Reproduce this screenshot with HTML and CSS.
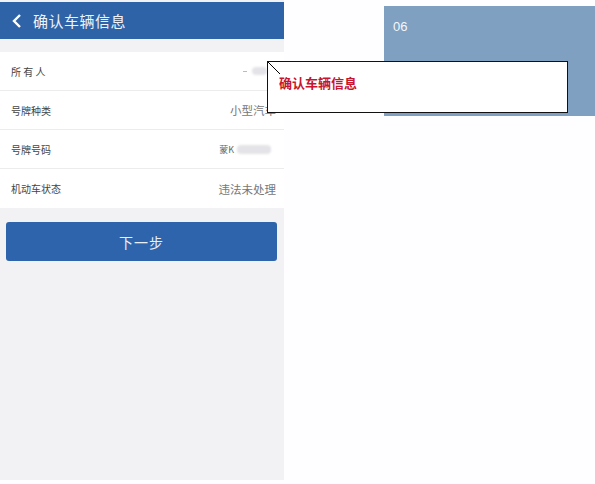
FILE: index.html
```html
<!DOCTYPE html>
<html lang="zh-CN">
<head>
  <meta charset="UTF-8" />
  <title>确认车辆信息</title>
  <link rel="stylesheet" href="styles.css">
</head>
<body>

  <div class="page">
    <!-- Phone screen -->
    <div class="phone">
      <div class="top-bar">
        <svg class="back" width="10" height="14" viewBox="0 0 10 14">
          <path d="M8 1 L2 7 L8 13" fill="none" stroke="#fff" stroke-width="2.4"/>
        </svg>
        <span class="top-title">确认车辆信息</span>
      </div>

      <ul class="info-list">
        <li><span class="label">所 有 人</span><span class="value"><i class="dash"></i><i class="blur small"></i></span></li>
        <li><span class="label">号牌种类</span><span class="value">小型汽车</span></li>
        <li><span class="label">号牌号码</span><span class="value plate">蒙K<i class="blur wide"></i></span></li>
        <li><span class="label">机动车状态</span><span class="value">违法未处理</span></li>
      </ul>

      <div class="btn-wrap">
        <div class="next-btn">下一步</div>
      </div>
    </div>

    <!-- Step tag -->
    <div class="step-box">06</div>

    <!-- Callout -->
    <div class="callout">
      <svg class="pointer" width="14" height="14" viewBox="0 0 14 14">
        <path d="M0 0 L12 12" stroke="#000" stroke-width="1"/>
      </svg>
      确认车辆信息
    </div>
  </div>

</body>
</html>
```

FILE: styles.css
```css
* {
  box-sizing: border-box;
  margin: 0;
  padding: 0;
}

body {
  background: #fefdff;
  font-family: "Noto Sans CJK SC", "Liberation Sans", sans-serif;
  width: 595px;
  height: 484px;
  overflow: hidden;
}

.page {
  position: relative;
  width: 595px;
  height: 484px;
}

.phone {
  width: 284px;
  height: 480px;
  background: #f2f1f4;
  padding-top: 2px;
}

.top-bar {
  height: 37px;
  background: #2e63a8;
  display: flex;
  align-items: center;
  padding-left: 12px;
}

.back {
  margin-right: 11px;
}

.top-title {
  color: #eef2f9;
  font-size: 15px;
  letter-spacing: 0.5px;
}

.info-list {
  list-style: none;
  margin-top: 13px;
  background: #fff;
}

.info-list li {
  height: 39px;
  display: flex;
  align-items: center;
  justify-content: space-between;
  padding: 0 8px 0 11px;
  border-bottom: 1px solid #ececec;
}

.info-list li:last-child {
  border-bottom: none;
}

.label {
  font-size: 10px;
  color: #444;
}

.value {
  font-size: 11.5px;
  color: #777;
  display: flex;
  align-items: center;
}

.value.plate {
  font-size: 9px;
  color: #666;
  padding-right: 5px;
}

.dash {
  width: 4px;
  height: 1px;
  background: #bbb;
  margin-right: 5px;
}

.blur {
  display: inline-block;
  background: #e4e4e8;
  border-radius: 4px;
  filter: blur(1px);
}

.blur.small {
  width: 15px;
  height: 8px;
  margin-right: 9px;
}

.blur.wide {
  width: 34px;
  height: 9px;
  margin-left: 3px;
}

.btn-wrap {
  padding: 14px 7px 0 6px;
}

.next-btn {
  height: 39px;
  background: #2e64ab;
  border-radius: 3px;
  color: #e9eef7;
  font-size: 14px;
  display: flex;
  align-items: center;
  justify-content: center;
  letter-spacing: 1px;
}

.step-box {
  position: absolute;
  left: 384px;
  top: 6px;
  width: 211px;
  height: 110px;
  background: #7fa0c0;
  color: #f4f7fb;
  font-family: "Liberation Sans", sans-serif;
  font-size: 13px;
  padding: 13px 0 0 9px;
}

.callout {
  position: absolute;
  left: 267px;
  top: 61px;
  width: 301px;
  height: 52px;
  background: #fff;
  border: 1px solid #111;
  color: #c8142c;
  font-size: 13px;
  font-weight: bold;
  padding: 11px 0 0 11px;
}

.pointer {
  position: absolute;
  left: 0;
  top: 0;
}
```
